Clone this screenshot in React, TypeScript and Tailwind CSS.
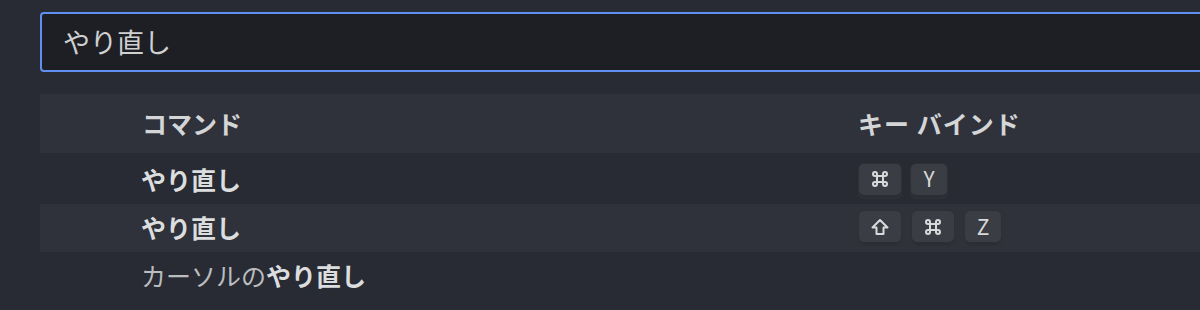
import React from "react";

const font = { fontFamily: '"Noto Sans CJK JP", "Noto Sans", sans-serif' };

function Key({ children, wide }: { children: React.ReactNode; wide?: boolean }) {
  return (
    <div
      className={
        (wide ? "w-[44px] " : "w-[38px] ") +
        "flex h-[36px] items-center justify-center rounded-[6px] border border-[#2d3036] bg-[#3a3d44] text-[21px] font-normal text-[#d8d9db] shadow-[inset_0_-3px_0_#2b2e34]"
      }
    >
      <span className="-mt-[3px] flex items-center">{children}</span>
    </div>
  );
}

function CmdIcon() {
  return (
    <svg width="18" height="18" viewBox="0 0 18 18" fill="none" stroke="#d8d9db" strokeWidth="2">
      <path d="M6 6 H12 V12 H6 Z" />
      <path d="M6 6 V4 A2 2 0 1 0 4 6 H6" />
      <path d="M12 6 V4 A2 2 0 1 1 14 6 H12" />
      <path d="M6 12 V14 A2 2 0 1 1 4 12 H6" />
      <path d="M12 12 V14 A2 2 0 1 0 14 12 H12" />
    </svg>
  );
}

function ShiftIcon() {
  return (
    <svg width="20" height="20" viewBox="0 0 20 20" fill="none" stroke="#d8d9db" strokeWidth="2" strokeLinejoin="round">
      <path d="M10 3 L17.5 10.5 H13.5 V17 H6.5 V10.5 H2.5 Z" />
    </svg>
  );
}

export default function App() {
  return (
    <div className="h-[310px] w-[1200px] overflow-hidden bg-[#282b33]" style={font}>
      <div className="pl-[40px] pt-[12px]">
        <div className="flex h-[60px] w-[1200px] items-center rounded-[4px] border-2 border-[#5f8ff0] bg-[#1e1f24] pl-[21px] text-[27px] text-[#cfd0d2]">
          やり直し
        </div>
        <div className="mt-[22px] w-[1200px]">
          <div className="flex h-[59px] items-center bg-[#2f323a] text-[25px] font-bold text-[#d4d5d7]">
            <div className="w-[818px] pl-[102px]">コマンド</div>
            <div className="tracking-[1px]">キー バインド</div>
          </div>
          <div className="flex h-[51px] items-center text-[25px] font-bold text-[#dcdddf]">
            <div className="w-[818px] pl-[101px] pt-[3px]">やり直し</div>
            <div className="flex gap-[8px] pt-[4px]">
              <Key wide>
                <CmdIcon />
              </Key>
              <Key>Y</Key>
            </div>
          </div>
          <div className="flex h-[48px] items-center bg-[#2f323a] text-[25px] font-bold text-[#dcdddf]">
            <div className="w-[818px] pl-[101px]">やり直し</div>
            <div className="flex gap-[9px]">
              <Key wide>
                <ShiftIcon />
              </Key>
              <Key wide>
                <CmdIcon />
              </Key>
              <Key>Z</Key>
            </div>
          </div>
          <div className="flex h-[48px] items-center text-[25px] text-[#bbbcbf]">
            <div className="pl-[101px]">
              カーソルの<span className="font-bold text-[#dcdddf]">やり直し</span>
            </div>
          </div>
        </div>
      </div>
    </div>
  );
}
